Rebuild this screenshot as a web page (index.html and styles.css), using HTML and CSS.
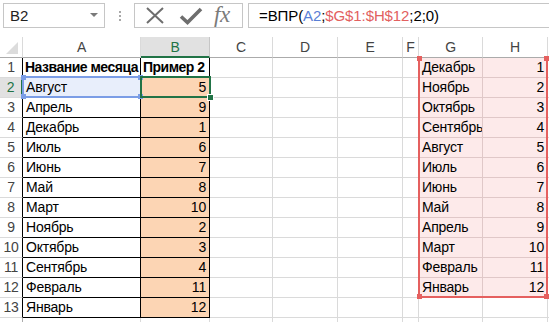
FILE: index.html
```html
<!DOCTYPE html>
<html>
<head>
<meta charset="utf-8">
<link rel="stylesheet" href="styles.css">
</head>
<body>
<div class="app">
  <div class="toolbar">
    <div class="namebox"><span class="nb-text">B2</span><span class="nb-arrow"></span></div>
    <div class="grip"><span></span><span></span><span></span></div>
    <div class="iconbox">
      <svg class="ico" width="36" height="24" viewBox="0 0 36 24"><path d="M11 4 L27 19 M27 4 L11 19" stroke="#6e6e6e" stroke-width="2" fill="none"/></svg>
      <svg class="ico" width="36" height="24" viewBox="0 0 36 24"><path d="M9 12.5 L15.5 18.5 L29 5" stroke="#6e6e6e" stroke-width="3.6" fill="none" stroke-linejoin="miter"/></svg>
      <span class="fx">fx</span>
    </div>
    <div class="formula">=ВПР(<span class="ref-a">A2</span>;<span class="ref-g">$G$1:$H$12</span>;2;0)</div>
  </div>
  <div class="sheet">
    <div class="corner"><span class="tri"></span></div><div class="ch">A</div><div class="ch sel">B</div><div class="ch">C</div><div class="ch">D</div><div class="ch">E</div><div class="ch">F</div><div class="ch">G</div><div class="ch">H</div><div class="ch"></div>

    <div class="rh bk">1</div><div class="c bk b">Название месяца</div><div class="c bk b">Пример 2</div><div class="c"></div><div class="c"></div><div class="c"></div><div class="c"></div><div class="c pk">Декабрь</div><div class="c pk n">1</div><div class="c"></div>
    <div class="rh bk rsel">2</div><div class="c bk hl">Август</div><div class="c bk or n">5</div><div class="c"></div><div class="c"></div><div class="c"></div><div class="c"></div><div class="c pk">Ноябрь</div><div class="c pk n">2</div><div class="c"></div>
    <div class="rh bk">3</div><div class="c bk">Апрель</div><div class="c bk or n">9</div><div class="c"></div><div class="c"></div><div class="c"></div><div class="c"></div><div class="c pk">Октябрь</div><div class="c pk n">3</div><div class="c"></div>
    <div class="rh bk">4</div><div class="c bk">Декабрь</div><div class="c bk or n">1</div><div class="c"></div><div class="c"></div><div class="c"></div><div class="c"></div><div class="c pk">Сентябрь</div><div class="c pk n">4</div><div class="c"></div>
    <div class="rh bk">5</div><div class="c bk">Июль</div><div class="c bk or n">6</div><div class="c"></div><div class="c"></div><div class="c"></div><div class="c"></div><div class="c pk">Август</div><div class="c pk n">5</div><div class="c"></div>
    <div class="rh bk">6</div><div class="c bk">Июнь</div><div class="c bk or n">7</div><div class="c"></div><div class="c"></div><div class="c"></div><div class="c"></div><div class="c pk">Июль</div><div class="c pk n">6</div><div class="c"></div>
    <div class="rh bk">7</div><div class="c bk">Май</div><div class="c bk or n">8</div><div class="c"></div><div class="c"></div><div class="c"></div><div class="c"></div><div class="c pk">Июнь</div><div class="c pk n">7</div><div class="c"></div>
    <div class="rh bk">8</div><div class="c bk">Март</div><div class="c bk or n">10</div><div class="c"></div><div class="c"></div><div class="c"></div><div class="c"></div><div class="c pk">Май</div><div class="c pk n">8</div><div class="c"></div>
    <div class="rh bk">9</div><div class="c bk">Ноябрь</div><div class="c bk or n">2</div><div class="c"></div><div class="c"></div><div class="c"></div><div class="c"></div><div class="c pk">Апрель</div><div class="c pk n">9</div><div class="c"></div>
    <div class="rh bk">10</div><div class="c bk">Октябрь</div><div class="c bk or n">3</div><div class="c"></div><div class="c"></div><div class="c"></div><div class="c"></div><div class="c pk">Март</div><div class="c pk n">10</div><div class="c"></div>
    <div class="rh bk">11</div><div class="c bk">Сентябрь</div><div class="c bk or n">4</div><div class="c"></div><div class="c"></div><div class="c"></div><div class="c"></div><div class="c pk">Февраль</div><div class="c pk n">11</div><div class="c"></div>
    <div class="rh bk">12</div><div class="c bk">Февраль</div><div class="c bk or n">11</div><div class="c"></div><div class="c"></div><div class="c"></div><div class="c"></div><div class="c pk">Январь</div><div class="c pk n">12</div><div class="c"></div>
    <div class="rh bk">13</div><div class="c bk">Январь</div><div class="c bk or n">12</div><div class="c"></div><div class="c"></div><div class="c"></div><div class="c"></div><div class="c"></div><div class="c"></div><div class="c"></div>
    <div class="rh"></div><div class="c"></div><div class="c"></div><div class="c"></div><div class="c"></div><div class="c"></div><div class="c"></div><div class="c"></div><div class="c"></div><div class="c"></div>

    <div class="range-a"><i class="sq tl"></i><i class="sq tr"></i><i class="sq bl"></i><i class="sq br"></i></div>
    <div class="range-g"><i class="sq tl"></i><i class="sq tr"></i><i class="sq bl"></i><i class="sq br"></i></div>
    <div class="cursor"><i class="handle"></i></div>
  </div>
</div>
</body>
</html>
```
FILE: styles.css
```css
* { box-sizing: border-box; }
html, body { margin: 0; padding: 0; background: #fff; }
body { width: 549px; height: 322px; overflow: hidden; font-family: "Liberation Sans", Arial, sans-serif; color: #000; }

.toolbar { height: 37px; display: flex; align-items: flex-start; padding-top: 3px; padding-left: 3px; }
.namebox { width: 102px; height: 25px; border: 1px solid #c6c6c6; display: flex; align-items: center; justify-content: space-between; padding: 0 6px 0 6px; }
.nb-text { font-size: 15px; color: #222; }
.nb-arrow { width: 0; height: 0; border-left: 4px solid transparent; border-right: 4px solid transparent; border-top: 4px solid #7a7a7a; margin-top: -2px; }
.grip { width: 29px; height: 25px; display: flex; flex-direction: column; align-items: center; justify-content: center; gap: 2px; }
.grip span { width: 2px; height: 2px; background: #a8a8a8; }
.iconbox { width: 109px; height: 25px; border: 1px solid #c6c6c6; display: flex; align-items: center; padding-left: 1px; }
.ico { display: block; }
.fx { font-family: "Liberation Serif", "Times New Roman", serif; font-style: italic; font-size: 23px; color: #7a7a7a; margin-left: 6px; line-height: 1; margin-top: -3px; letter-spacing: -0.5px; }
.formula { flex: 1; height: 25px; margin-left: 5px; margin-right: -3px; border: 1px solid #c6c6c6; font-size: 15px; padding-left: 10px; line-height: 23px; letter-spacing: -0.1px; }
.ref-a { color: #5a7fd6; }
.ref-g { color: #e2605f; }

.sheet { position: relative; display: grid; grid-template-columns: 23px 118px 69px 63px 65px 65px 16px 64px 65px 1fr; grid-template-rows: 21px; grid-auto-rows: 20px; font-size: 14px; letter-spacing: -0.2px; }
.corner { border-right: 1px solid #dadada; border-bottom: 1px solid #ababab; position: relative; }
.tri { position: absolute; right: 4px; bottom: 3px; width: 0; height: 0; border-left: 12px solid transparent; border-bottom: 12px solid #dcdcdc; }
.ch { border-right: 1px solid #dadada; border-bottom: 1px solid #ababab; text-align: center; color: #444; line-height: 20px; }
.ch.sel { background: #e1e1e1; color: #217346; border-bottom: 2px solid #217346; border-right-color: #c6c6c6; }
.rh { border-right: 1px solid #ababab; border-bottom: 1px solid #dadada; text-align: center; color: #444; line-height: 19px; font-size: 14px; }
.rh.bk { border-right-color: #000; }
.rh.rsel { background: #e1e1e1; color: #217346; border-right: 2px solid #217346; }
.c { border-right: 1px solid #dadada; border-bottom: 1px solid #dadada; padding: 0 3px; line-height: 19px; white-space: nowrap; overflow: hidden; }
.c.bk { border-right-color: #000; border-bottom-color: #000; }
.c.b { font-weight: bold; letter-spacing: -0.5px; padding: 0 2px; }
.c.n { text-align: right; }
.c.or { background: #fcd5b4; }
.c.hl { background: #e8eefb; }
.c.pk { background: #fdeaea; border-right-color: #e0c8c8; border-bottom-color: #e0c8c8; }

.range-a { position: absolute; left: 22px; top: 39px; width: 120px; height: 22px; border: 2px solid #7b9de6; }
.range-g { position: absolute; left: 418px; top: 20px; width: 130px; height: 241px; border: 2px solid #e5605f; border-top: none; }
.sq { position: absolute; width: 5px; height: 5px; }
.range-a .sq { background: #7b9de6; }
.range-g .sq { background: #e5605f; }
.sq.tl { left: -3px; top: -3px; }
.sq.tr { right: -3px; top: -3px; }
.sq.bl { left: -3px; bottom: -3px; }
.sq.br { right: -3px; bottom: -3px; }
.range-g .sq.tl, .range-g .sq.tr { top: -1px; }
.cursor { position: absolute; left: 140px; top: 39px; width: 71px; height: 22px; border: 2px solid #217346; }
.handle { position: absolute; right: -5px; bottom: -5px; width: 7px; height: 7px; background: #217346; border: 1px solid #fff; }
```
